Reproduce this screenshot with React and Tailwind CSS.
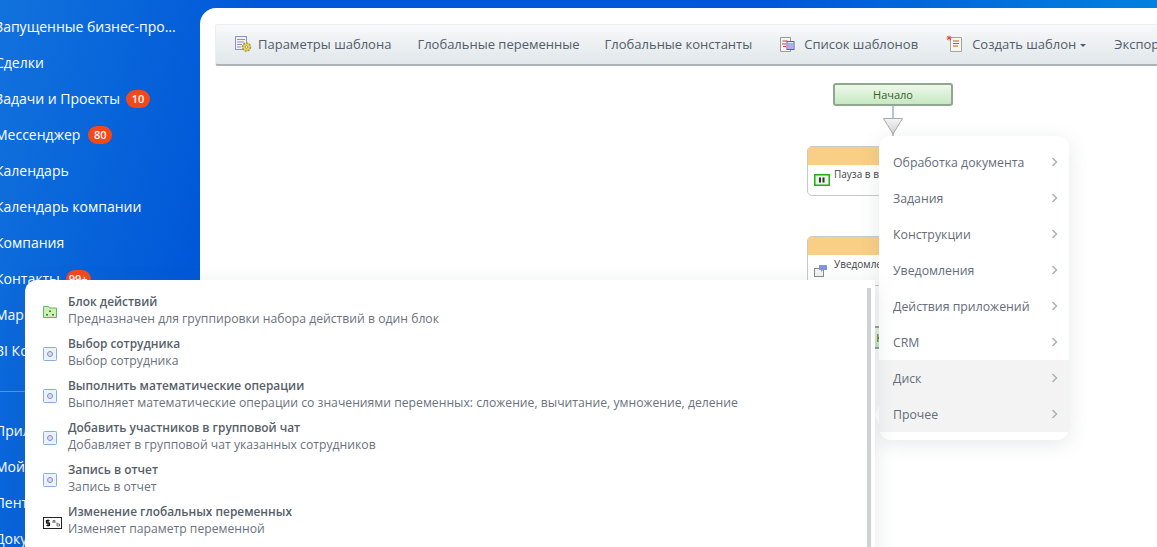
import React from "react";

function Badge({ children, className }) {
  return (
    <span className={"mt-[1px] inline-flex h-[18px] min-w-[24px] items-center justify-center rounded-full bg-[#f54819] px-[3px] text-[11px] font-semibold leading-none text-white " + (className || "ml-[6px]")}>
      {children}
    </span>
  );
}

function NavRow({ label, badge, badgeClass }) {
  return (
    <div className="flex h-9 items-center whitespace-nowrap text-[14px] font-normal text-white">
      <span>{label}</span>
      {badge ? <Badge className={badgeClass}>{badge}</Badge> : null}
    </div>
  );
}

function Sidebar() {
  return (
    <aside className="-mt-[28px] w-[200px] shrink-0 overflow-hidden">
      <div className="-ml-[5px]">
        <NavRow label="Лента" badge="3" />
        <NavRow label="Запущенные бизнес-про..." />
        <NavRow label="Сделки" />
        <NavRow label="Задачи и Проекты" badge="10" />
        <NavRow label="Мессенджер" badge="80" badgeClass="ml-[8px]" />
        <NavRow label="Календарь" />
        <NavRow label="Календарь компании" />
        <NavRow label="Компания" />
        <NavRow label="Контакты" badge="99+" />
        <NavRow label="Маркетинг" />
        <NavRow label="BI Конструктор" />
      </div>
      <div className="mt-[23px] mb-[20px] h-px bg-white/30" />
      <div className="-ml-[5px]">
        <NavRow label="Приложения" />
        <NavRow label="Мой Битрикс24" />
        <NavRow label="Лента новостей" />
        <NavRow label="Документы" />
      </div>
    </aside>
  );
}

function IconParams() {
  return (
    <svg width="18" height="18" viewBox="0 0 18 18" className="-mt-[2px] shrink-0">
      <rect x="1.5" y="1.5" width="11" height="13" fill="#f2f2fa" stroke="#8f8fca" />
      <path d="M3 4.5h8M3 7h7M3 9.500h5M3 12h4" stroke="#8f8fca" strokeWidth="1" />
      <circle cx="12.500" cy="12" r="4" fill="#e8d567" stroke="#a8983a" strokeDasharray="2 1" strokeWidth="1.500" />
      <circle cx="12.500" cy="12" r="1.300" fill="#fff" stroke="#8a7c2a" strokeWidth="0.700" />
    </svg>
  );
}

function IconList() {
  return (
    <svg width="16" height="17" viewBox="0 0 16 17" className="-mt-[2px] shrink-0">
      <path d="M1.500 1.500h10v14h-10z" fill="#f6f6f6" stroke="#9a9a9a" />
      <path d="M3.500 5h5M3 8h4M4 10.500h3" stroke="#e83a1c" strokeWidth="1" />
      <rect x="8" y="5.500" width="7" height="8" fill="#e6e6fa" stroke="#5a5ad0" />
      <path d="M9 8h5M9 10h5M9 12h5" stroke="#5a5ad0" strokeWidth="0.800" />
    </svg>
  );
}

function IconCreate() {
  return (
    <svg width="18" height="18" viewBox="0 0 18 18" className="-mt-[3px] shrink-0">
      <path d="M4.500 2.500h11v14h-11z" fill="#f7f7f2" stroke="#a5a5a0" />
      <path d="M7 6h6M7 8.500h6M7 11h5" stroke="#e8461c" strokeWidth="1" />
      <path d="M3 .5v5M.5 3h5M1.200 1.200l3.600 3.600M4.800 1.200l-3.600 3.600" stroke="#f0301a" strokeWidth="0.800" />
    </svg>
  );
}

function ToolItem({ icon, children, caret, className }) {
  return (
    <div className={"flex shrink-0 items-center whitespace-nowrap pt-[1px] text-[13px] text-[#535c69] " + (className || "")}>
      {icon}
      <span>{children}</span>
      {caret ? <span className="-ml-[4px] h-0 w-0 border-x-[3px] border-t-[3px] border-x-transparent border-t-[#535c69]" /> : null}
    </div>
  );
}

function Toolbar() {
  return (
    <div className="mx-[15px] mt-[16px] -mr-[100px] flex h-[42px] items-center overflow-hidden rounded-[3px] border-t border-l border-[#eceeef] border-b-2 border-b-[#b0b3b6] bg-[linear-gradient(#f8f9fa,#e0e7ea)] pl-[18px]">
      <ToolItem icon={<IconParams />} className="gap-[6px]">Параметры шаблона</ToolItem>
      <ToolItem className="ml-[26px]">Глобальные переменные</ToolItem>
      <ToolItem className="ml-[25px]">Глобальные константы</ToolItem>
      <ToolItem icon={<IconList />} className="ml-[27px] gap-[9px]">Список шаблонов</ToolItem>
      <ToolItem icon={<IconCreate />} caret className="ml-[28px] gap-[8px]">Создать шаблон</ToolItem>
      <ToolItem className="ml-[28px]">Экспорт шаблона</ToolItem>
    </div>
  );
}

function GreenNode({ label, top }) {
  return (
    <div
      className="absolute left-[633px] flex h-[23px] w-[120px] items-center justify-center rounded-[3px] border-2 border-[#8fa88f] bg-[linear-gradient(#eef8ea,#c7e8c2)] pt-[1px] text-[11px] text-[#3a5f2c]"
      style={{ top }}
    >
      {label}
    </div>
  );
}

function ActivityNode({ top, icon, label }) {
  return (
    <div
      className="absolute left-[607px] h-[50px] w-[172px] overflow-hidden rounded-[5px] border border-[#c9c9c9] bg-white"
      style={{ top }}
    >
      <div className="h-[18px] bg-[#f9cf85]" />
      <div className="flex gap-[4px] pl-[6px] pt-[2px] text-[10px] leading-[14px] text-[#444]">
        <span className="mt-[7px] w-[16px] shrink-0">{icon}</span>
        <span>{label}</span>
      </div>
    </div>
  );
}

function Canvas() {
  return (
    <>
      <GreenNode label="Начало" top={75} />
      <div className="absolute left-[692px] top-[98px] h-[40px] w-[2px] bg-[#b4c3d6]" />
      <svg className="absolute left-[683px] top-[110px]" width="20" height="17" viewBox="0 0 20 17">
        <defs>
          <linearGradient id="tri" x1="0" y1="0" x2="0" y2="1">
            <stop offset="0" stopColor="#f4f4f4" />
            <stop offset="1" stopColor="#d4d4d4" />
          </linearGradient>
        </defs>
        <path d="M.5.5h19L10 16z" fill="url(#tri)" stroke="#a8a8a8" />
      </svg>
      <ActivityNode
        top={138}
        label="Пауза в выполнении"
        icon={
          <svg width="16" height="12" viewBox="0 0 16 12">
            <rect x=".75" y=".75" width="14.500" height="10.500" fill="#e6f2e2" stroke="#22b014" strokeWidth="1.500" />
            <path d="M6 3.500v5M9.500 3.500v5" stroke="#333" strokeWidth="2" />
          </svg>
        }
      />
      <ActivityNode
        top={228}
        label="Уведомление"
        icon={
          <svg width="14" height="14" viewBox="0 0 14 14">
            <rect x=".5" y="4.500" width="9" height="8" fill="#f3f3f3" stroke="#8a8a8a" />
            <path d="M5 1h8v5H9l-2 2V6H5z" fill="#8496d8" />
          </svg>
        }
      />
      <GreenNode label="Конец" top={318} />
    </>
  );
}

function Chevron() {
  return (
    <svg width="7" height="10" viewBox="0 0 7 10" className="shrink-0">
      <path d="M1.500 1l4 4-4 4" fill="none" stroke="#aeb2b8" strokeWidth="1.500" />
    </svg>
  );
}

const menu = ["Обработка документа", "Задания", "Конструкции", "Уведомления", "Действия приложений", "CRM", "Диск", "Прочее"];

function RightMenu() {
  return (
    <div className="absolute left-[879px] top-[136px] w-[190px] rounded-[12px] bg-white py-[8px] shadow-[0_4px_20px_rgba(80,90,100,0.14)]">
      <div className="absolute -left-[4px] top-[269px] h-0 w-0 border-y-[10px] border-r-[4px] border-y-transparent border-r-white" />
      {menu.map((m, i) => (
        <div
          key={m}
          className={"flex h-9 items-center justify-between pl-[14px] pr-[11px] text-[12.3px] text-[#656d78] " + (i >= 6 ? "bg-[#f3f3f4]" : "")}
        >
          <span className="pt-[3px]">{m}</span>
          <Chevron />
        </div>
      ))}
    </div>
  );
}

function IconFolder() {
  return (
    <svg width="14" height="13" viewBox="0 0 14 13">
      <path d="M.5 2.500V1.500h5l1 1.500h7v9.500H.5z" fill="#cfeebb" stroke="#5cbb52" />
      <path d="M6 5.500h2v1.500H6zM3 9h2v1.500H3zM9 9h2v1.500H9z" fill="#3f7a3a" />
    </svg>
  );
}
function IconBox() {
  return (
    <svg width="14" height="14" viewBox="0 0 14 14">
      <rect x=".5" y=".5" width="13" height="13" rx="1" fill="#eaf3fd" stroke="#86aedd" />
      <circle cx="7" cy="7" r="2.500" fill="#dcdcf0" stroke="#8a8ac0" />
    </svg>
  );
}
function IconVar() {
  return (
    <svg width="19" height="12" viewBox="0 0 19 12" className="mt-[2px]">
      <rect x=".5" y=".5" width="18" height="11" fill="#fff" stroke="#222" />
      <path d="M6.500 3.500h-3v2.500h3v2.500h-3M5 2.500v7" fill="none" stroke="#111" strokeWidth="1.200" />
      <path d="M10 6V3.500h2V6M10 5h2M14 5.500v3.500h2.500V7H14" fill="none" stroke="#555" strokeWidth="0.800" />
    </svg>
  );
}

const activities = [
  [<IconFolder />, "Блок действий", "Предназначен для группировки набора действий в один блок"],
  [<IconBox />, "Выбор сотрудника", "Выбор сотрудника"],
  [<IconBox />, "Выполнить математические операции", "Выполняет математические операции со значениями переменных: сложение, вычитание, умножение, деление"],
  [<IconBox />, "Добавить участников в групповой чат", "Добавляет в групповой чат указанных сотрудников"],
  [<IconBox />, "Запись в отчет", "Запись в отчет"],
  [<IconVar />, "Изменение глобальных переменных", "Изменяет параметр переменной"],
];

function ActivityMenu() {
  return (
    <div className="absolute left-[25px] top-[280px] h-[300px] w-[850px] rounded-tl-[12px] bg-white pt-[9px] shadow-[0_4px_20px_rgba(80,90,100,0.14)]">
      <div className="absolute left-[842px] top-[8px] h-[300px] w-[4px] bg-[#ccd1d3]" />
      {activities.map(([icon, title, desc]) => (
        <div key={title} className="flex h-[42px] items-center">
          <div className="flex w-[43px] shrink-0 justify-start pl-[18px] pt-[3px]">{icon}</div>
          <div className="-mt-[1px]">
            <div className="text-[11.9px] font-semibold leading-[17px] text-[#565e69]">{title}</div>
            <div className="text-[12.2px] leading-[17px] text-[#6b727c]">{desc}</div>
          </div>
        </div>
      ))}
    </div>
  );
}

export default function App() {
  return (
    <div className="relative flex h-[547px] w-[1157px] overflow-hidden bg-[linear-gradient(105deg,#1272dc_0%,#0058d8_20%,#0056d8_58%,#0090e2_100%)] font-['Open_Sans',sans-serif]">
      <Sidebar />
      <main className="relative mt-2 flex-1 rounded-tl-[16px] bg-white">
        <Toolbar />
        <Canvas />
      </main>
      <RightMenu />
      <ActivityMenu />
    </div>
  );
}
